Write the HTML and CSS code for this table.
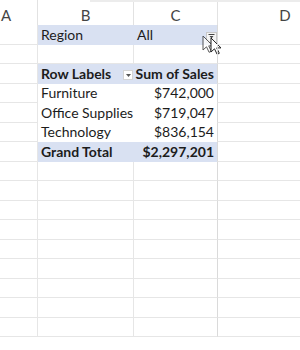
FILE: index.html
```html
<!DOCTYPE html>
<html>
<head>
<meta charset="utf-8">
<link rel="stylesheet" href="styles.css">
</head>
<body>
<div class="topstrip"></div>
<div class="sheet">
  <div class="hd hd-a">A</div>
  <div class="hd">B</div>
  <div class="hd">C</div>
  <div class="hd hd-d">D</div>

  <div class="c"></div>
  <div class="c blue">Region</div>
  <div class="c blue filter">All<span class="ddbtn"><svg width="7" height="5" viewBox="0 0 7 5"><rect x="0.5" y="0" width="6" height="1" fill="#444"/><path d="M1.5 2h4l-2 2.5z" fill="#444"/></svg></span>
    <span class="cursor"><svg width="26" height="20" viewBox="0 0 26 20"><path d="M1 1v14l3.5-3.2 2.6 5.5 2.2-1-2.6-5.4H11z" fill="#fff" stroke="#222" stroke-width="1" opacity="0.75"/><path d="M9 3v14l3.5-3.2 2.6 5.5 2.2-1-2.6-5.4H19z" fill="#fff" stroke="#222" stroke-width="1"/></svg></span>
  </div>
  <div class="c d"></div>

  <div class="c"></div>
  <div class="c"></div>
  <div class="c"></div>
  <div class="c d"></div>

  <div class="c"></div>
  <div class="c blue b nb lbl">Row Labels<span class="fbtn"><svg width="5" height="3" viewBox="0 0 5 3"><path d="M0 0h5L2.5 3z" fill="#555"/></svg></span></div>
  <div class="c blue b r">Sum of Sales</div>
  <div class="c d"></div>

  <div class="c"></div>
  <div class="c nb tb">Furniture</div>
  <div class="c r tb">$742,000</div>
  <div class="c d"></div>

  <div class="c"></div>
  <div class="c nb tb">Office Supplies</div>
  <div class="c r tb">$719,047</div>
  <div class="c d"></div>

  <div class="c"></div>
  <div class="c nb tb">Technology</div>
  <div class="c r tb">$836,154</div>
  <div class="c d"></div>

  <div class="c"></div>
  <div class="c blue b nb">Grand Total</div>
  <div class="c blue b r">$2,297,201</div>
  <div class="c d"></div>

  <div class="c"></div><div class="c"></div><div class="c"></div><div class="c d"></div>
  <div class="c"></div><div class="c"></div><div class="c"></div><div class="c d"></div>
  <div class="c"></div><div class="c"></div><div class="c"></div><div class="c d"></div>
  <div class="c"></div><div class="c"></div><div class="c"></div><div class="c d"></div>
  <div class="c"></div><div class="c"></div><div class="c"></div><div class="c d"></div>
  <div class="c"></div><div class="c"></div><div class="c"></div><div class="c d"></div>
  <div class="c"></div><div class="c"></div><div class="c"></div><div class="c d"></div>
  <div class="c"></div><div class="c"></div><div class="c"></div><div class="c d"></div>
  <div class="c"></div><div class="c"></div><div class="c"></div><div class="c d"></div>
</div>
</body>
</html>
```
FILE: styles.css
```css
html, body {
  margin: 0;
  padding: 0;
  background: #ffffff;
  width: 300px;
  height: 350px;
  overflow: hidden;
}
body {
  font-family: Lato, "Liberation Sans", sans-serif;
  font-size: 14px;
  color: #1c1c1c;
  position: relative;
}
.topstrip {
  position: absolute;
  left: 90px;
  top: 0;
  width: 210px;
  height: 2px;
  background: #ececec;
}
.sheet {
  display: grid;
  grid-template-columns: 38px 96px 84px 82px;
  grid-template-rows: 25px;
  grid-auto-rows: 19.5px;
  width: 300px;
}
.hd {
  display: flex;
  align-items: center;
  justify-content: center;
  font-size: 15px;
  color: #444;
  padding-top: 4px;
  border-right: 1px solid #e2e2e2;
  box-sizing: border-box;
}
.hd-a {
  justify-content: flex-start;
  padding-left: 1px;
}
.hd-d {
  border-right: none;
  padding-left: 52px;
}
.c {
  box-sizing: border-box;
  border-right: 1px solid #e6e6e6;
  border-bottom: 1px solid #e6e6e6;
  display: flex;
  align-items: center;
  padding: 0 3px;
  white-space: nowrap;
  position: relative;
}
.c.d { border-right: none; border-left: 1px solid #dadada; margin-left: -1px; }
.blue {
  background: #d9e1f2;
  border-color: #d9e1f2;
}
.b { font-weight: bold; }
.r { justify-content: flex-end; }
.nb { border-right-color: transparent; }
.blue.nb { border-right-color: #d9e1f2; }
.tb { border-bottom-color: transparent; }
.filter { padding-left: 3px; }
.ddbtn {
  position: absolute;
  left: 72px;
  top: 7px;
  width: 11px;
  height: 11px;
  box-sizing: border-box;
  background: #f4f4f4;
  border: 1px solid #c8c8c8;
  display: flex;
  align-items: flex-start;
  justify-content: center;
  padding-top: 1px;
}
.cursor {
  position: absolute;
  left: 68px;
  top: 10px;
  line-height: 0;
}
.lbl { padding-right: 0; }
.fbtn {
  position: absolute;
  left: 85px;
  top: 6px;
  width: 10px;
  height: 10px;
  box-sizing: border-box;
  background: #ffffff;
  border: 1px solid #d4d4d4;
  display: flex;
  align-items: center;
  justify-content: center;
}
```
